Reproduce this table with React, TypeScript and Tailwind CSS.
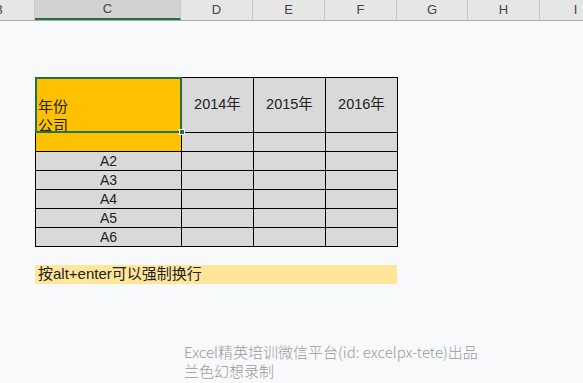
const cols = [
  { label: "B", w: "w-[72px] ml-[-37px]" },
  { label: "C", w: "w-[146px]", active: true },
  { label: "D", w: "w-[72px]" },
  { label: "E", w: "w-[72px]" },
  { label: "F", w: "w-[72px]" },
  { label: "G", w: "w-[71px]" },
  { label: "H", w: "w-[72px]" },
  { label: "I", w: "w-[72px]" },
];

const rows = ["A2", "A3", "A4", "A5", "A6"];

const cell = "border border-black bg-[#d9d9d9]";

export default function App() {
  return (
    <div className="h-[383px] w-[583px] overflow-hidden bg-[#f8f9fa] font-['Liberation_Sans','Noto_Sans_CJK_SC',sans-serif]">
      <div className="flex h-[21px] overflow-hidden border-b border-[#ababab] bg-[#e6e6e6]">
        {cols.map((c) => (
          <div
            key={c.label}
            className={`${c.w} flex shrink-0 items-center justify-center border-r border-[#c8c8c8] text-[13px] text-[#444] ${
              c.active ? "border-b-2 border-b-[#217346] bg-[#d2d2d2]" : ""
            }`}
          >
            {c.label}
          </div>
        ))}
      </div>

      <div className="relative ml-[35px] mt-[56px] w-[363px]">
        <table className="border-collapse text-[14px] text-[#222]">
          <tbody>
            <tr className="h-[55px]">
              <td rowSpan={2} className="w-[146px] border border-black bg-[#ffc000] px-[2px] pt-[2px] align-middle text-[15px] leading-[19px]">
                年份
                <br />
                公司
              </td>
              <td className={`${cell} w-[72px] text-center text-[14.5px]`}>2014年</td>
              <td className={`${cell} w-[72px] text-center text-[14.5px]`}>2015年</td>
              <td className={`${cell} w-[72px] text-center text-[14.5px]`}>2016年</td>
            </tr>
            <tr className="h-[19px]">
              <td className={cell} />
              <td className={cell} />
              <td className={cell} />
            </tr>
            {rows.map((r) => (
              <tr key={r} className="h-[19px] leading-[17px]">
                <td className={`${cell} text-center`}>{r}</td>
                <td className={cell} />
                <td className={cell} />
                <td className={cell} />
              </tr>
            ))}
          </tbody>
        </table>
        <div className="pointer-events-none absolute left-0 top-0 h-[56px] w-[147px] border-2 border-[#217346]" />
        <div className="absolute left-[144px] top-[52px] h-[6px] w-[6px] border border-white bg-[#217346]" />
      </div>

      <div className="ml-[35px] mt-[18px] flex h-[19px] w-[362px] items-center bg-[#ffe699] px-[3px] text-[15px] text-[#222]">
        按alt+enter可以强制换行
      </div>

      <div className="ml-[184px] mt-[58px] text-[15px] font-light leading-[19px] text-[#9a9a9a] font-['Noto_Sans_CJK_SC',sans-serif]">
        <p>Excel精英培训微信平台(id: excelpx-tete)出品</p>
        <p>兰色幻想录制</p>
      </div>
    </div>
  );
}
